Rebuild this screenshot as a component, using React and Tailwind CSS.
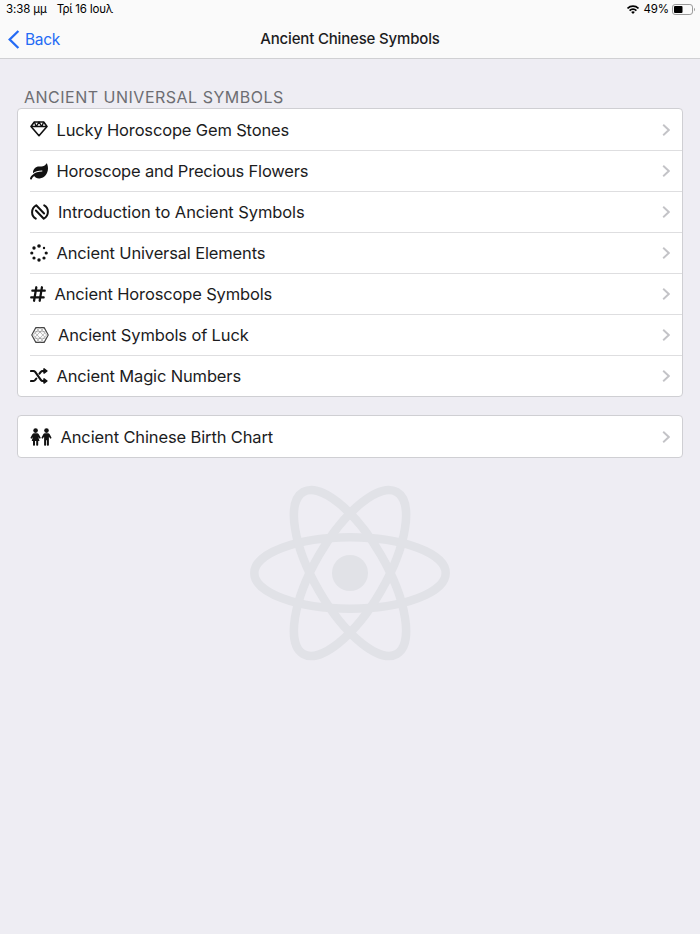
import clsx from "clsx";
import { FaLeaf } from "react-icons/fa";
import { FaHashtag } from "react-icons/fa6";

function GemIcon() {
  return (
    <svg className="-mt-0.5 h-4 w-[18px]" viewBox="0 0 18 16" fill="none" stroke="#111" strokeWidth="1.6" strokeLinejoin="round">
      <path d="M4.3 1h9.4L17 5.5 9 14.7 1 5.5z" />
      <path d="M1 5.5h16M4.3 1l2 4.5L9 1l2.7 4.5 2-4.5" strokeWidth="1.4" />
    </svg>
  );
}

function NfcIcon() {
  return (
    <svg className="ml-px h-4 w-[18px]" viewBox="0 0 18 16" fill="none" stroke="#111" strokeWidth="2" strokeLinecap="round" strokeLinejoin="round">
      <path d="M4.8 14.6C2.4 13.3 1.1 11 1.1 8.2c0-2.900 1.400-5.400 4.100-6.900l7.900 8.200" />
      <path d="M13.200 1.400C15.600 2.700 16.900 5 16.900 7.800c0 2.900-1.400 5.400-4.100 6.900L4.900 6.500" />
    </svg>
  );
}

function DotsIcon() {
  return (
    <svg className="h-[18px] w-[18px]" viewBox="0 0 18 18" fill="#111">
      <circle cx="9" cy="2" r="1.8" />
      <circle cx="4" cy="4" r="1.7" />
      <circle cx="14" cy="4" r="1.2" />
      <circle cx="1.8" cy="9" r="1.6" />
      <circle cx="16.2" cy="9" r="1.6" />
      <circle cx="4" cy="14" r="1.6" />
      <circle cx="14" cy="14" r="1.6" />
      <circle cx="9" cy="16" r="1.7" />
    </svg>
  );
}

function HexagonIcon() {
  return (
    <svg className="ml-px h-[18px] w-[18px]" viewBox="0 0 19 18" fill="none" stroke="#444" strokeLinejoin="round">
      <path d="M5.1 1.2h8.8L18.2 9l-4.3 7.8H5.1L.8 9z" strokeWidth="1.2" />
      <g strokeWidth=".6" stroke="#888">
        <path d="M5.1 1.2l9.8 10.3M13.9 1.2l-9.8 10.3M5.1 16.8l9.8-10.3M13.9 16.8L4.1 6.5" />
        <path d="M9.5 1.2L2.5 9l7 7.8 7-7.8zM3.5 5.5h12M3.5 12.5h12" />
      </g>
    </svg>
  );
}

function ShuffleIcon() {
  return (
    <svg className="h-[16px] w-[18px]" viewBox="0 0 18 16" fill="none" stroke="#111" strokeWidth="2.1" strokeLinecap="round">
      <path d="M1 3h2.3c.8 0 1.4.3 1.9.9l5.6 8c.5.7 1.1 1.1 1.9 1.1H14" />
      <path d="M1 13h2.3c.8 0 1.4-.3 1.9-1l1.1-1.5M9.5 5.7l1.3-1.7c.5-.7 1.1-1 1.9-1H14" />
      <path d="M14 .9v4.200l2.900-2.100zM14 10.900v4.200l2.900-2.100z" fill="#111" strokeWidth="1.5" strokeLinejoin="round" />
    </svg>
  );
}

function PeopleIcon() {
  return (
    <svg className="h-[18px] w-[22px]" viewBox="0 0 22 18" fill="#111">
      <circle cx="5.6" cy="2.6" r="2.3" />
      <path d="M4 5.3h3.2c.7 0 1.2.3 1.6.9l1.8 3.2c.5 1-.7 1.8-1.4.9L8.3 9l1.2 4H8.2v4.1c0 1-2 1-2 0V13H5v4.1c0 1-2 1-2 0V13H1.7l1.2-4-.9 1.3c-.7.9-1.9.1-1.4-.9l1.8-3.2c.4-.6.9-.9 1.6-.9z" />
      <circle cx="16.5" cy="2.6" r="2.3" />
      <path d="M14.9 5.3h3.2c.7 0 1.2.3 1.6.9l1.7 3.2c.5 1-.8 1.8-1.4.9L18.9 8.8v8.3c0 1-2 1-2 0v-4.8h-.8v4.8c0 1-2 1-2 0V8.8L13 10.3c-.6.9-1.9.1-1.4-.9l1.7-3.2c.4-.6.9-.9 1.6-.9z" />
    </svg>
  );
}

function ReactLogo() {
  return (
    <svg className="h-[180px] w-[202px]" viewBox="-101 -90 202 180" fill="none" stroke="#e1e2e7" strokeWidth="8.5">
      <circle r="18" fill="#e1e2e7" stroke="none" />
      <ellipse rx="95.7" ry="35.8" />
      <ellipse rx="93.5" ry="35.8" transform="rotate(60)" />
      <ellipse rx="93.5" ry="35.8" transform="rotate(120)" />
    </svg>
  );
}

const symbols = [
  { label: "Lucky Horoscope Gem Stones", icon: <GemIcon />, spacing: "ml-[8.5px] tracking-[-0.16px]" },
  { label: "Horoscope and Precious Flowers", icon: <FaLeaf className="h-[17px] w-[18px]" />, spacing: "ml-[8.5px] tracking-[-0.2px]" },
  { label: "Introduction to Ancient Symbols", icon: <NfcIcon />, spacing: "ml-[9px] tracking-[-0.08px]" },
  { label: "Ancient Universal Elements", icon: <DotsIcon />, spacing: "ml-[8.5px] tracking-[-0.15px]" },
  { label: "Ancient Horoscope Symbols", icon: <FaHashtag className="h-[18px] w-[16px]" />, spacing: "ml-[8.5px] tracking-[-0.15px]" },
  { label: "Ancient Symbols of Luck", icon: <HexagonIcon />, spacing: "ml-[9px] tracking-[-0.14px]" },
  { label: "Ancient Magic Numbers", icon: <ShuffleIcon />, spacing: "ml-[8.5px] tracking-[-0.15px]" },
];

const charts = [
  { label: "Ancient Chinese Birth Chart", icon: <PeopleIcon />, spacing: "ml-[8.5px] tracking-[-0.13px]" },
];

function Row({ item, last }) {
  return (
    <div className={clsx("ml-3 flex items-center pr-[12px]", last ? "h-10" : "h-[41px] border-b border-[#dedee0]")}>
      <span className="shrink-0 text-[#111]">{item.icon}</span>
      <span className={clsx("text-[16.5px] leading-5 whitespace-nowrap", item.spacing)}>{item.label}</span>
      <svg className="ml-auto h-3 w-2" viewBox="0 0 8 12" fill="none" stroke="#c3c3c7" strokeWidth="1.9">
        <path d="M1.2.7 6.8 6l-5.6 5.3" />
      </svg>
    </div>
  );
}

function Card({ items, className }) {
  return (
    <div className={clsx("mx-[17px] rounded-[4px] border border-[#cfcfd3] bg-white pt-px", className)}>
      {items.map((item, i) => (
        <Row key={item.label} item={item} last={i === items.length - 1} />
      ))}
    </div>
  );
}

function App() {
  return (
    <div className="h-[934px] w-[700px] overflow-hidden bg-[#eeedf3] font-[Inter,'Noto_Sans',sans-serif] text-[#1c1c1e]">
      <header className="h-[59px] border-b border-[#d0d0d3] bg-[#fafafa]">
        <div className="flex h-[19px] items-center pr-[4px] pl-[6px] text-[11.5px] leading-none text-black">
          <span className="tracking-[-0.1px]">3:38 μμ</span>
          <span className="ml-[10px] tracking-[-0.2px]">Τρί 16 Ιουλ</span>
          <svg className="ml-auto h-[9px] w-3" viewBox="0 0 12 9" fill="none" stroke="#000" strokeWidth="1.7">
            <path d="M.5 3.4a7.8 7.8 0 0 1 11 0M2.6 5.6a4.8 4.8 0 0 1 6.8 0" />
            <path d="M6 9 4.1 7.1a2.7 2.7 0 0 1 3.8 0z" fill="#000" stroke="none" />
          </svg>
          <span className="ml-[4px] tracking-[-0.1px]">49%</span>
          <svg className="ml-[3px] h-[11px] w-[24px]" viewBox="0 0 24 11" fill="none">
            <rect x=".5" y=".5" width="20" height="10" rx="2.6" stroke="#999" />
            <rect x="2" y="2" width="8.5" height="7" rx="1" fill="#000" />
            <path d="M22 3.8c1.3.6 1.3 2.8 0 3.4z" fill="#999" />
          </svg>
        </div>
        <div className="grid h-[40px] grid-cols-3 items-center px-2 text-[15.5px]">
          <div className="flex items-center text-[#246bf5]">
            <svg className="h-[19px] w-[12px]" viewBox="0 0 12 19" fill="none" stroke="currentColor" strokeWidth="2.3">
              <path d="M10.4 1 1.7 9.5l8.7 8.5" />
            </svg>
            <span className="ml-[5px] pt-px tracking-[-0.35px]">Back</span>
          </div>
          <h1 className="pt-px text-center text-[15px] font-medium tracking-[-0.17px] whitespace-nowrap">Ancient Chinese Symbols</h1>
        </div>
      </header>

      <h2 className="mt-[28px] ml-[24px] h-[21px] text-[16px] leading-[20px] tracking-[0.5px] text-[#6d6d72]">
        ANCIENT UNIVERSAL SYMBOLS
      </h2>
      <Card items={symbols} />
      <Card className="mt-[18px]" items={charts} />
      <div className="mt-[25px] flex justify-center">
        <ReactLogo />
      </div>
    </div>
  );
}

export default App;
